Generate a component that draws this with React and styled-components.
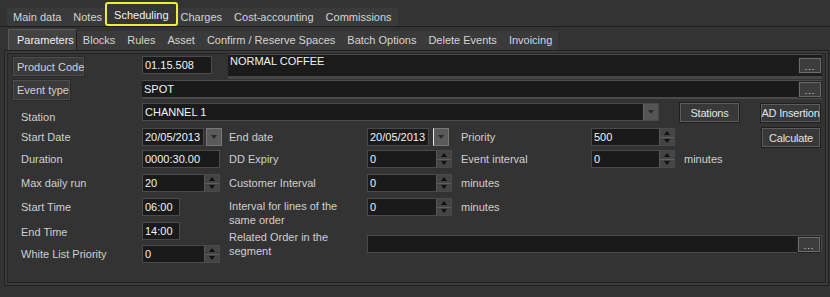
import React from 'react';
import styled, { createGlobalStyle, css } from 'styled-components';

const GlobalStyle = createGlobalStyle`
  html, body {
    margin: 0;
    padding: 0;
    background: #333333;
  }
  body {
    font-family: "Liberation Sans", Arial, sans-serif;
    font-size: 11px;
    color: #d0d0d0;
  }
`;

const mainTabs = ['Main data', 'Notes', 'Scheduling', 'Charges', 'Cost-accounting', 'Commissions'];
const subTabs = ['Parameters', 'Blocks', 'Rules', 'Asset', 'Confirm / Reserve Spaces', 'Batch Options', 'Delete Events', 'Invoicing'];

const Window = styled.div`
  width: 830px;
  height: 297px;
  overflow: hidden;
  background: #333333;
`;

const MainTabsRow = styled.div`
  display: flex;
  align-items: flex-end;
  height: 27px;
  box-sizing: border-box;
  padding-left: 7px;
  border-bottom: 1px solid #1e1e1e;
`;

const MainStrip = styled.div`
  display: flex;
  align-items: flex-end;
  height: 18px;
  background: #3a3a3a;
  border-radius: 2px 2px 0 0;
`;

const MainTab = styled.div`
  padding: 0 6px;
  height: 18px;
  line-height: 18px;
  white-space: nowrap;
  color: #d4d4d4;

  ${p => p.$active && css`
    position: relative;
    z-index: 1;
    margin: 0 -3px;
    height: 24px;
    box-sizing: border-box;
    padding: 2px 7px 0;
    line-height: 18px;
    border: 2px solid #ecec3a;
    border-radius: 3px;
    background: #353535;
    color: #f2f2f2;
  `}
`;

const SubTabsRow = styled.div`
  display: flex;
  align-items: flex-end;
  height: 23px;
  padding-left: 8px;
`;

const SubStrip = styled.div`
  display: flex;
  align-items: flex-end;
  height: 19px;
  background: #3a3a3a;
  border-radius: 2px 2px 0 0;
`;

const SubTab = styled.div`
  padding: 0 6px;
  height: 19px;
  line-height: 19px;
  white-space: nowrap;
  color: #d4d4d4;

  ${p => p.$active && css`
    height: 21px;
    line-height: 20px;
    box-sizing: border-box;
    padding: 0 2px 0 8px;
    background: #424242;
    border: 1px solid #5a5a5a;
    border-right-color: #1e1e1e;
    border-bottom: none;
    color: #f0f0f0;
  `}
`;

const Panel = styled.div`
  margin: 0 1px 0 4px;
  height: 236px;
  box-sizing: border-box;
  border: 1px solid #202020;
  box-shadow: inset 0 0 0 2px #3b3b3b, inset 0 0 0 3px #232323;
  padding: 3px 0 0 8px;
`;

const Form = styled.div`
  display: grid;
  grid-template-columns: 129px 87px 138px 94px 130px 89px 80px 62px;
  grid-template-rows: 26px 23px 25px 22px 24px 24px 24px 23px 24px;
`;

const place = css`
  grid-column: ${p => p.$col};
  grid-row: ${p => p.$row};
  margin-top: ${p => p.$mt || 0}px;
  margin-left: ${p => p.$ml || 0}px;
  margin-right: ${p => p.$mr || 0}px;
  justify-self: ${p => (p.$w ? 'start' : 'stretch')};
  align-self: start;
  ${p => p.$w && `width: ${p.$w}px;`}
`;

const Label = styled.div`
  ${place};
  display: flex;
  align-items: center;
  height: ${p => p.$h || 18}px;
  padding-left: ${p => p.$indent || 0}px;
  white-space: nowrap;
  color: #cfcfcf;
`;

const WrapLabel = styled.div`
  ${place};
  line-height: 14px;
  color: #cfcfcf;
`;

const LabelButton = styled.div`
  ${place};
  display: flex;
  align-items: center;
  height: ${p => p.$h || 19}px;
  box-sizing: border-box;
  padding: 0 2px 0 3px;
  background: #3a3a3a;
  border: 1px solid #4d4d4d;
  box-shadow: 0 0 0 1px #292929;
  color: #d2d2d2;
  white-space: nowrap;
`;

const Button = styled.div`
  ${place};
  display: flex;
  align-items: center;
  justify-content: center;
  height: ${p => p.$h || 19}px;
  box-sizing: border-box;
  background: #383838;
  border: 1px solid #5c5c5c;
  box-shadow: 0 0 0 1px #1f1f1f;
  color: #e2e2e2;
  letter-spacing: -0.2px;
  white-space: nowrap;
`;

const Box = styled.div`
  ${place};
  display: flex;
  height: ${p => p.$h || 18}px;
  box-sizing: border-box;
  background: #1a1a1a;
  border: 1px solid #4a4a4a;
  color: #f2f2f2;
`;

const WideBox = styled(Box)`
  border-top-color: #4c4c4c;
  border-bottom: 2px solid #4a4a4a;
  border-left: none;
  border-right: none;
`;

const DescBox = styled.div`
  ${place};
  display: flex;
  height: 25px;
  box-sizing: border-box;
  background: #1b1b1b;
  border-top: 1px solid #4a4a4a;
  border-bottom: 3px solid #464646;
  color: #f2f2f2;
`;

const Value = styled.div`
  flex: 1;
  padding: 0 2px;
  line-height: ${p => p.$lh || 16}px;
  white-space: nowrap;
  overflow: hidden;
`;

const Ellipsis = styled.div`
  align-self: center;
  width: 22px;
  height: 15px;
  box-sizing: border-box;
  margin-right: 1px;
  background: #3d3d3d;
  border: 1px solid #6a6a6a;
  box-shadow: 0 0 0 1px #222;
  color: #e8e8e8;
  font-size: 9px;
  line-height: 17px;
  text-align: center;
  letter-spacing: 1px;
`;

const Spinner = styled.div`
  display: flex;
  flex-direction: column;
  width: 14px;
  background: #444;
  border-left: 1px solid #555;
`;

const SpinButton = styled.div`
  flex: 1;
  display: flex;
  align-items: center;
  justify-content: center;
  & + & {
    border-top: 1px solid #5e5e5e;
  }
`;

const Arrow = styled.div`
  width: 0;
  height: 0;
  border-left: 3.5px solid transparent;
  border-right: 3.5px solid transparent;
  ${p => (p.$dir === 'up'
    ? 'border-bottom: 4px solid #101010;'
    : 'border-top: 4px solid #101010;')}
`;

const DateWrap = styled.div`
  ${place};
  display: flex;
  gap: ${p => p.$gap || 2}px;
  height: 18px;
`;

const DropButton = styled.div`
  display: flex;
  align-items: center;
  justify-content: center;
  width: 16px;
  height: 18px;
  box-sizing: border-box;
  background: #5a5a5a;
  border: 1px solid #777;
  ${p => p.$caret && 'border-left: 1px solid #e8e8e8;'}
`;

const SelectArrow = styled.div`
  display: flex;
  align-items: center;
  justify-content: center;
  width: 14px;
  background: #555;
  border-left: 1px solid #666;
`;

const SmallArrow = styled.div`
  width: 0;
  height: 0;
  border-left: 3.5px solid transparent;
  border-right: 3.5px solid transparent;
  border-top: 4px solid ${p => p.$color || '#2a2a2a'};
`;

function SpinBox({ value, ...rest }) {
  return (
    <Box {...rest}>
      <Value>{value}</Value>
      <Spinner>
        <SpinButton><Arrow $dir="up" /></SpinButton>
        <SpinButton><Arrow $dir="down" /></SpinButton>
      </Spinner>
    </Box>
  );
}

function DateBox({ value, caret, gap, ...rest }) {
  return (
    <DateWrap $gap={gap} {...rest}>
      <Box $w={62}>
        <Value>{value}</Value>
      </Box>
      <DropButton $caret={caret}>
        <SmallArrow />
      </DropButton>
    </DateWrap>
  );
}

export default function App() {
  return (
    <Window>
      <GlobalStyle />
      <MainTabsRow>
        <MainStrip>
          {mainTabs.map(t => (
            <MainTab key={t} $active={t === 'Scheduling'}>{t}</MainTab>
          ))}
        </MainStrip>
      </MainTabsRow>
      <SubTabsRow>
        <SubStrip>
          {subTabs.map(t => (
            <SubTab key={t} $active={t === 'Parameters'}>{t}</SubTab>
          ))}
        </SubStrip>
      </SubTabsRow>
      <Panel>
        <Form>
          {/* product */}
          <LabelButton $col="1" $row="1" $mt={3} $w={71}>Product Code</LabelButton>
          <Box $col="2" $row="1" $mt={2} $w={70}><Value>01.15.508</Value></Box>
          <DescBox $col="3 / -1" $row="1" $ml={-1}>
            <Value $lh={13}>NORMAL COFFEE</Value>
            <Ellipsis>...</Ellipsis>
          </DescBox>

          <LabelButton $col="1" $row="2" $h={20} $w={57}>Event type</LabelButton>
          <WideBox $col="2 / -1" $row="2" $h={19}>
            <Value>SPOT</Value>
            <Ellipsis>...</Ellipsis>
          </WideBox>

          {/* station */}
          <Label $col="1" $row="3" $indent={8} $mt={5}>Station</Label>
          <Box $col="2 / 7" $row="3" $mr={21}>
            <Value>CHANNEL 1</Value>
            <SelectArrow><SmallArrow $color="#2c2c2c" /></SelectArrow>
          </Box>
          <Button $col="7" $row="3" $w={59}>Stations</Button>
          <Button $col="8" $row="3" $ml={1} $mt={1} $h={18} $w={59}>AD Insertion</Button>

          {/* dates */}
          <Label $col="1" $row="4" $indent={8}>Start Date</Label>
          <DateBox $col="2" $row="4" value="20/05/2013" />
          <Label $col="3" $row="4">End date</Label>
          <DateBox $col="4" $row="4" value="20/05/2013" gap={4} caret />
          <Label $col="5" $row="4">Priority</Label>
          <SpinBox $col="6" $row="4" $w={84} value="500" />
          <Button $col="8" $row="4" $ml={2} $w={58}>Calculate</Button>

          <Label $col="1" $row="5" $indent={8}>Duration</Label>
          <Box $col="2" $row="5" $w={78}><Value>0000:30.00</Value></Box>
          <Label $col="3" $row="5">DD Expiry</Label>
          <SpinBox $col="4" $row="5" $w={85} value="0" />
          <Label $col="5" $row="5">Event interval</Label>
          <SpinBox $col="6" $row="5" $w={84} value="0" />
          <Label $col="7" $row="5" $indent={4}>minutes</Label>

          <Label $col="1" $row="6" $indent={8}>Max daily run</Label>
          <SpinBox $col="2" $row="6" $w={78} value="20" />
          <Label $col="3" $row="6">Customer Interval</Label>
          <SpinBox $col="4" $row="6" $w={85} value="0" />
          <Label $col="5" $row="6">minutes</Label>

          <Label $col="1" $row="7" $indent={8}>Start Time</Label>
          <Box $col="2" $row="7" $w={38}><Value>06:00</Value></Box>
          <WrapLabel $col="3" $row="7 / 9" $mt={1}>Interval for lines of the<br />same order</WrapLabel>
          <SpinBox $col="4" $row="7" $w={85} value="0" />
          <Label $col="5" $row="7">minutes</Label>

          <Label $col="1" $row="8" $indent={8} $mt={1}>End Time</Label>
          <Box $col="2" $row="8" $w={38}><Value>14:00</Value></Box>
          <WrapLabel $col="3" $row="8 / 10" $mt={8}>Related Order in the<br />segment</WrapLabel>
          <Box $col="4 / -1" $row="8 / 10" $mt={13}>
            <Value />
            <Ellipsis>...</Ellipsis>
          </Box>

          <Label $col="1" $row="9" $indent={8}>White List Priority</Label>
          <SpinBox $col="2" $row="9" $w={78} value="0" />
        </Form>
      </Panel>
    </Window>
  );
}
